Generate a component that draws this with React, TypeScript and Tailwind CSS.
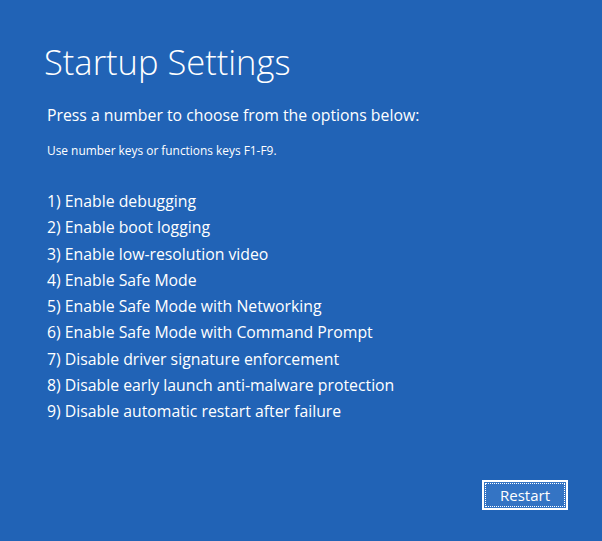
const options = [
  "Enable debugging",
  "Enable boot logging",
  "Enable low-resolution video",
  "Enable Safe Mode",
  "Enable Safe Mode with Networking",
  "Enable Safe Mode with Command Prompt",
  "Disable driver signature enforcement",
  "Disable early launch anti-malware protection",
  "Disable automatic restart after failure",
];

export default function App() {
  return (
    <div className="w-[602px] h-[541px] bg-[#2163b6] text-white font-['Open_Sans','Noto_Sans',sans-serif] flex flex-col">
      <div className="pl-[44px] pt-[38px] flex-1">
        <h1 className="text-[34.5px] font-light leading-[48px]">Startup Settings</h1>
        <p className="mt-[17px] pl-[3px] text-[15.8px] leading-[24px]">
          Press a number to choose from the options below:
        </p>
        <p className="mt-[15px] pl-[3px] text-[11.9px] leading-[16px]">
          Use number keys or functions keys F1-F9.
        </p>
        <ol className="mt-[30px] pl-[3px] text-[15.8px] leading-[26.3px]">
          {options.map((o, i) => (
            <li key={o}>
              {i + 1}) {o}
            </li>
          ))}
        </ol>
      </div>
      <div className="flex justify-end pr-[34px] pb-[31px]">
        <button className="w-[86px] h-[30px] border-2 border-white bg-[#3474c4] p-[1px]">
          <span className="flex h-full w-full items-center justify-center border border-dotted border-white text-[15px]">
            Restart
          </span>
        </button>
      </div>
    </div>
  );
}
